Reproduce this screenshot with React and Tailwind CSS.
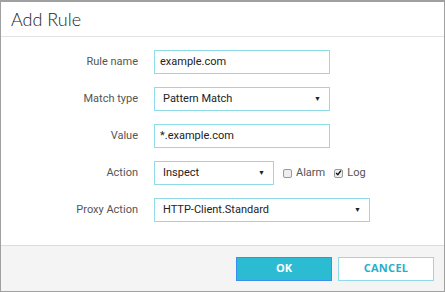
import React from 'react';

const Caret = () => (
    <span className="text-[7px] text-[#222] leading-none">▼</span>
);

const Row = ({ label, children }) => (
    <div className="flex items-center h-[24px]">
        <div className="w-[137px] text-right text-[11px] text-[#555] pt-[1px]">{label}</div>
        <div className="ml-[16px] flex items-center">{children}</div>
    </div>
);

const TextBox = ({ value, width }) => (
    <div className={`h-[24px] border border-[#8fdbe8] flex items-center px-[5px] text-[11px] text-[#222] bg-white ${width}`}>
        {value}
    </div>
);

const SelectBox = ({ value, width }) => (
    <div className={`h-[24px] border border-[#8fdbe8] flex items-center justify-between pl-[8px] pr-[8px] text-[11px] text-[#222] bg-white ${width}`}>
        <span>{value}</span>
        <Caret />
    </div>
);

const Check = ({ checked }) => (
    <span className="w-[9px] h-[9px] border border-[#999] rounded-[2px] bg-[#eee] flex items-center justify-center">
        {checked && (
            <svg width="8" height="8" viewBox="0 0 10 10">
                <path d="M1.5 5 L4 7.5 L8.5 1.5" stroke="#111" strokeWidth="2" fill="none" />
            </svg>
        )}
    </span>
);

export default function App() {
    return (
        <div className="w-[445px] h-[292px] bg-white border border-[#a0a0a0] border-t-2 flex flex-col" style={{ fontFamily: 'Roboto, "Liberation Sans", Arial, sans-serif' }}>
            <div className="h-[35px] border-b border-[#e3e3e3] flex items-center pl-[10px]">
                <h1 className="text-[18px] text-[#222] font-light" style={{ fontFamily: 'Lato, "Open Sans", sans-serif' }}>Add Rule</h1>
            </div>
            <div className="flex-1 flex flex-col gap-[13px] pt-[13px]">
                <Row label="Rule name"><TextBox value="example.com" width="w-[176px]" /></Row>
                <Row label="Match type"><SelectBox value="Pattern Match" width="w-[176px]" /></Row>
                <Row label="Value"><TextBox value="*.example.com" width="w-[176px]" /></Row>
                <Row label="Action">
                    <SelectBox value="Inspect" width="w-[120px]" />
                    <label className="flex items-center gap-[4px] ml-[9px] text-[11px] text-[#555]"><Check />Alarm</label>
                    <label className="flex items-center gap-[4px] ml-[9px] text-[11px] text-[#555]"><Check checked />Log</label>
                </Row>
                <Row label="Proxy Action"><SelectBox value="HTTP-Client.Standard" width="w-[216px]" /></Row>
            </div>
            <div className="h-[46px] bg-[#f4f4f4] border-t border-[#dcdcdc] flex items-center justify-end gap-[6px] pr-[10px]">
                <button className="w-[96px] h-[24px] bg-[#2bbcd4] border border-[#3a8ff0] text-white text-[11px] font-bold" style={{ fontFamily: '"Open Sans", sans-serif' }}>OK</button>
                <button className="w-[96px] h-[24px] bg-white border border-[#8fdbe8] text-[#2aaec8] text-[11px] font-bold tracking-[0.3px]" style={{ fontFamily: '"Open Sans", sans-serif' }}>CANCEL</button>
            </div>
        </div>
    );
}
